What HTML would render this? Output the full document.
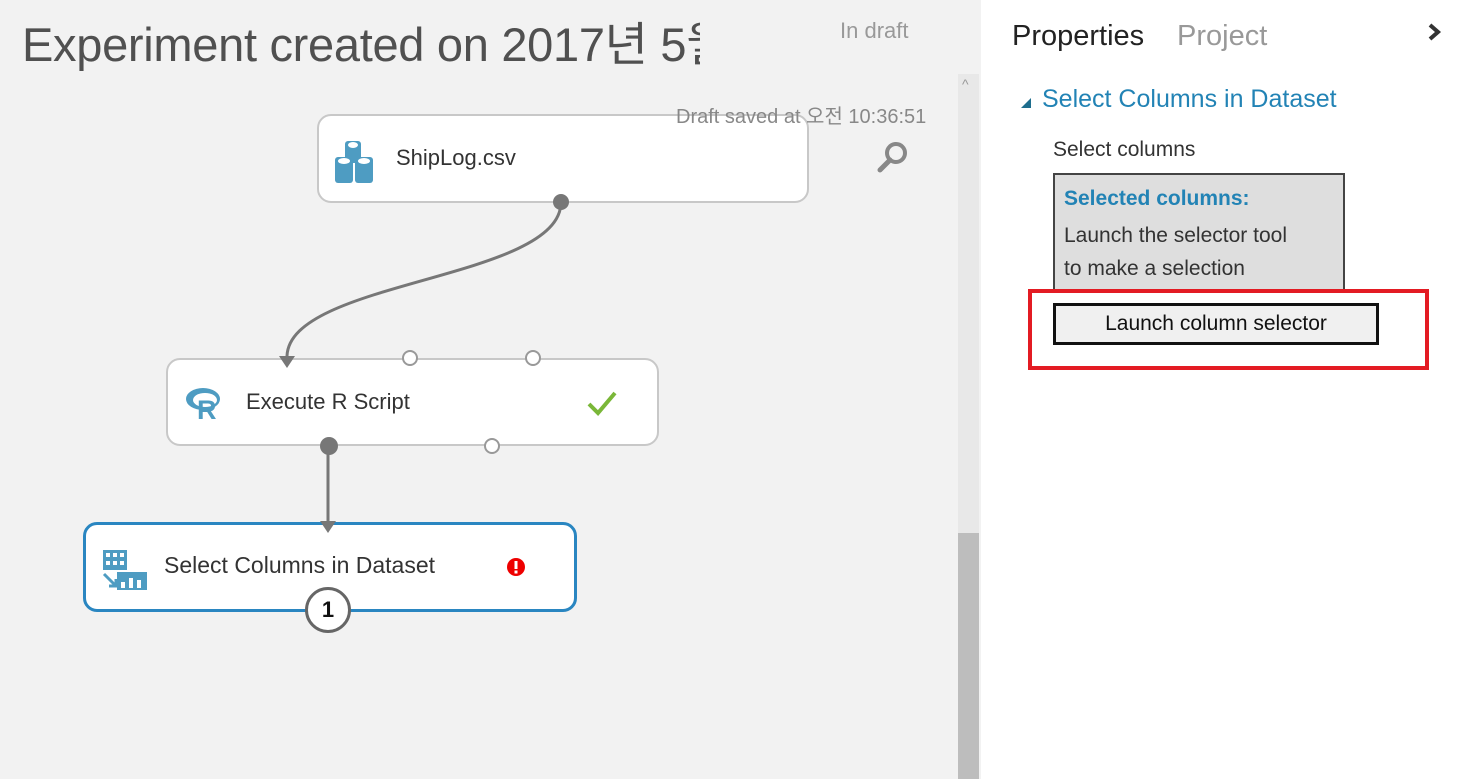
<!DOCTYPE html>
<html><head><meta charset="utf-8"><style>
body{margin:0;width:1461px;height:779px;overflow:hidden;background:#f2f2f2;font-family:"Segoe UI","Liberation Sans","Noto Sans CJK KR",sans-serif;position:relative}
.a{position:absolute}
.node{position:absolute;background:#fff;border:2px solid #c8c8c8;border-radius:14px;box-sizing:border-box}
.port{position:absolute;width:16px;height:16px;border:2px solid #999;border-radius:50%;background:#fff;box-sizing:border-box}
.t{font-size:22px;color:#333;white-space:nowrap}
</style></head><body>
<div class="a" style="left:22px;top:6px;font-size:47px;color:#505050;white-space:nowrap;width:678px;overflow:hidden;letter-spacing:-0.3px">Experiment created on 2017년 5월</div>
<div class="a" style="left:840px;top:18px;font-size:22px;color:#999">In draft</div>
<!-- scrollbar -->
<div class="a" style="left:958px;top:74px;width:21px;height:705px;background:#e8e8e8"></div>
<div class="a" style="left:958px;top:533px;width:21px;height:246px;background:#bdbdbd"></div>
<div class="a" style="left:962px;top:76px;font-size:14px;color:#999">^</div>
<!-- right panel -->
<div class="a" style="left:981px;top:0;width:480px;height:779px;background:#fff"></div>
<div class="a" style="left:1012px;top:20px;font-size:29px;color:#222">Properties</div>
<div class="a" style="left:1177px;top:20px;font-size:29px;color:#999">Project</div>
<svg class="a" style="left:1426px;top:22px" width="16" height="20"><path d="M4 3 L12 10 L4 17" stroke="#333" stroke-width="4" fill="none"/></svg>
<svg class="a" style="left:1019px;top:96px" width="14" height="14"><polygon points="12,2 12,12 2,12" fill="#1e6e8e"/></svg>
<div class="a" style="left:1042px;top:85px;font-size:25px;color:#2283b5">Select Columns in Dataset</div>
<div class="a" style="left:1053px;top:138px;font-size:21px;color:#333">Select columns</div>
<div class="a" style="left:1053px;top:173px;width:292px;height:125px;background:#dedede;border:2px solid #444;border-bottom:none;box-sizing:border-box"></div>
<div class="a" style="left:1064px;top:187px;font-size:21px;color:#2283b5;font-weight:bold">Selected columns:</div>
<div class="a" style="left:1064px;top:219px;font-size:21px;color:#333;line-height:33px">Launch the selector tool<br>to make a selection</div>
<div class="a" style="left:1028px;top:289px;width:401px;height:81px;border:4px solid #e31b23;box-sizing:border-box;background:#fff"></div>
<div class="a" style="left:1053px;top:303px;width:326px;height:42px;border:3px solid #111;box-sizing:border-box;background:#f0f0f0;font-size:21px;color:#111;text-align:center;line-height:36px">Launch column selector</div>
<!-- nodes -->
<div class="node" style="left:317px;top:114px;width:492px;height:89px"></div>
<div class="node" style="left:166px;top:358px;width:493px;height:88px"></div>
<div class="node" style="left:83px;top:522px;width:494px;height:90px;border:3px solid #2a86c1"></div>
<!-- connectors -->
<svg class="a" style="left:0;top:0" width="958" height="779">
<path d="M561 202 C561 280 290 280 287 356" stroke="#777" stroke-width="3" fill="none"/>
<polygon points="279,356 295,356 287,368" fill="#777"/>
<line x1="328" y1="446" x2="328" y2="522" stroke="#777" stroke-width="3"/>
<polygon points="320,521 336,521 328,533" fill="#777"/>
</svg>
<div class="a" style="left:676px;top:100px;font-size:20px;color:#888;white-space:nowrap">Draft saved at 오전 10:36:51</div>
<!-- ShipLog -->
<svg class="a" style="left:334px;top:139px" width="46" height="46"><g fill="#4e9cc2"><rect x="11" y="2" width="16" height="22" rx="3"/><rect x="1" y="18" width="18" height="26" rx="3"/><rect x="21" y="18" width="18" height="26" rx="3"/></g><g fill="#fff"><ellipse cx="19" cy="6" rx="5" ry="3"/><ellipse cx="10" cy="22" rx="6" ry="3"/><ellipse cx="30" cy="22" rx="6" ry="3"/></g></svg>
<div class="a t" style="left:396px;top:145px">ShipLog.csv</div>
<div class="a" style="left:553px;top:194px;width:16px;height:16px;border-radius:50%;background:#777"></div>
<svg class="a" style="left:876px;top:140px" width="34" height="34"><circle cx="20" cy="13" r="9" stroke="#888" stroke-width="4" fill="none"/><line x1="14" y1="20" x2="4" y2="30" stroke="#888" stroke-width="5" stroke-linecap="round"/></svg>
<!-- Execute R -->
<div class="port" style="left:402px;top:350px"></div>
<div class="port" style="left:525px;top:350px"></div>
<div class="port" style="left:484px;top:438px"></div>
<div class="a" style="left:320px;top:437px;width:18px;height:18px;border-radius:50%;background:#777"></div>
<svg class="a" style="left:184px;top:386px" width="42" height="36"><ellipse cx="19" cy="13" rx="17" ry="11" fill="#4e9cc2"/><ellipse cx="21" cy="14" rx="12" ry="7" fill="#fff"/><text x="13" y="33" font-family="Liberation Sans,sans-serif" font-weight="bold" font-size="27" fill="#4e9cc2">R</text></svg>
<div class="a t" style="left:246px;top:389px">Execute R Script</div>
<svg class="a" style="left:586px;top:389px" width="32" height="28"><path d="M3 15 L12 24 L29 4" stroke="#7ab738" stroke-width="4" fill="none"/></svg>
<!-- Select Columns -->
<svg class="a" style="left:101px;top:548px" width="48" height="44"><g fill="#4e9cc2"><rect x="2" y="2" width="24" height="20"/><rect x="16" y="24" width="30" height="18"/><path d="M3 26 L15 38 M8 38 H15 V31" stroke="#4e9cc2" stroke-width="3" fill="none"/></g><g fill="#fff"><rect x="5" y="5" width="4" height="4"/><rect x="12" y="5" width="4" height="4"/><rect x="19" y="5" width="4" height="4"/><rect x="5" y="13" width="4" height="4"/><rect x="12" y="13" width="4" height="4"/><rect x="19" y="13" width="4" height="4"/><rect x="20" y="34" width="4" height="6"/><rect x="28" y="30" width="4" height="10"/><rect x="36" y="32" width="4" height="8"/></g></svg>
<div class="a t" style="left:164px;top:552px;font-size:23px">Select Columns in Dataset</div>
<svg class="a" style="left:506px;top:557px" width="20" height="20"><circle cx="10" cy="10" r="9" fill="#e00"/><rect x="8.5" y="4" width="3" height="8" fill="#fff"/><rect x="8.5" y="13.5" width="3" height="3" fill="#fff"/></svg>
<div class="a" style="left:305px;top:587px;width:46px;height:46px;border:3px solid #666;border-radius:50%;background:#fff;box-sizing:border-box;text-align:center;line-height:40px;font-size:22px;font-weight:bold;color:#111;font-family:'Liberation Sans',sans-serif">1</div>
</body></html>
